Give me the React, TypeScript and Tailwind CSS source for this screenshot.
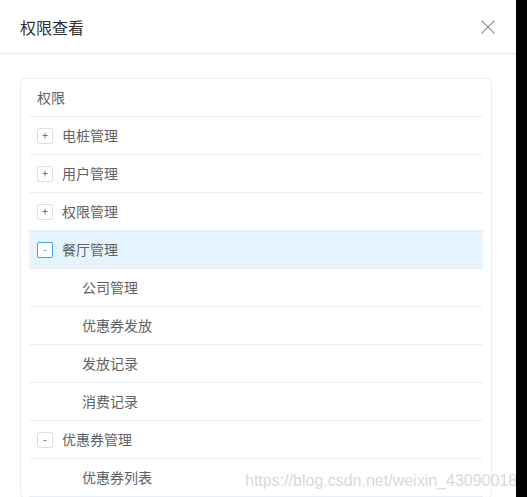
import { X } from 'lucide-react';

type Row = {
  label: string;
  level: 0 | 1;
  toggle?: '+' | '-';
  active?: boolean;
};

const rows: Row[] = [
  { label: '电桩管理', level: 0, toggle: '+' },
  { label: '用户管理', level: 0, toggle: '+' },
  { label: '权限管理', level: 0, toggle: '+' },
  { label: '餐厅管理', level: 0, toggle: '-', active: true },
  { label: '公司管理', level: 1 },
  { label: '优惠券发放', level: 1 },
  { label: '发放记录', level: 1 },
  { label: '消费记录', level: 1 },
  { label: '优惠券管理', level: 0, toggle: '-' },
  { label: '优惠券列表', level: 1 },
];

const font = { fontFamily: '"Noto Sans CJK SC", "Noto Sans", sans-serif' };

const App = () => {
  return (
    <div className="flex h-[497px] w-[527px] overflow-hidden bg-black">
      <div className="relative h-full w-[516px] overflow-hidden bg-white" style={font}>
        <div className="flex h-[54px] items-center justify-between border-b border-[#e8e8e8] pl-5 pr-4">
          <span className="text-[16px] text-[#303133]">权限查看</span>
          <X size={24} strokeWidth={1.1} className="text-[#909399]" />
        </div>

        <div className="pl-5 pt-6">
          <div className="w-[472px] rounded border border-[#ebeef5] px-2">
            <div className="flex h-[38px] items-center border-b border-[#ebeef5] pl-2 text-[14px] text-[#606266]">
              权限
            </div>
            {rows.map((row) => (
              <div
                key={row.label}
                className={`flex h-[38px] items-center border-b border-[#ebeef5] text-[14px] text-[#606266] ${
                  row.active ? 'bg-[#e5f4fd]' : ''
                } ${row.level === 1 ? 'pl-[53px]' : 'pl-2'}`}
              >
                {row.toggle && (
                  <span
                    className={`mr-[9px] flex h-4 w-4 items-center justify-center rounded-[2px] border bg-white text-[11px] leading-none ${
                      row.active ? 'border-[#409eff] text-[#409eff]' : 'border-[#dcdfe6] text-[#606266]'
                    }`}
                  >
                    {row.toggle}
                  </span>
                )}
                <span>{row.label}</span>
              </div>
            ))}
          </div>
        </div>

        <div
          className="absolute left-[245px] top-[469px] whitespace-nowrap text-[16px] text-[#d9d9d9]"
          style={{ fontFamily: '"Liberation Sans", Arial, sans-serif' }}
        >
          https://blog.csdn.net/weixin_43090018
        </div>
      </div>
      <div className="flex-1 bg-black" />
    </div>
  );
};

export default App;
